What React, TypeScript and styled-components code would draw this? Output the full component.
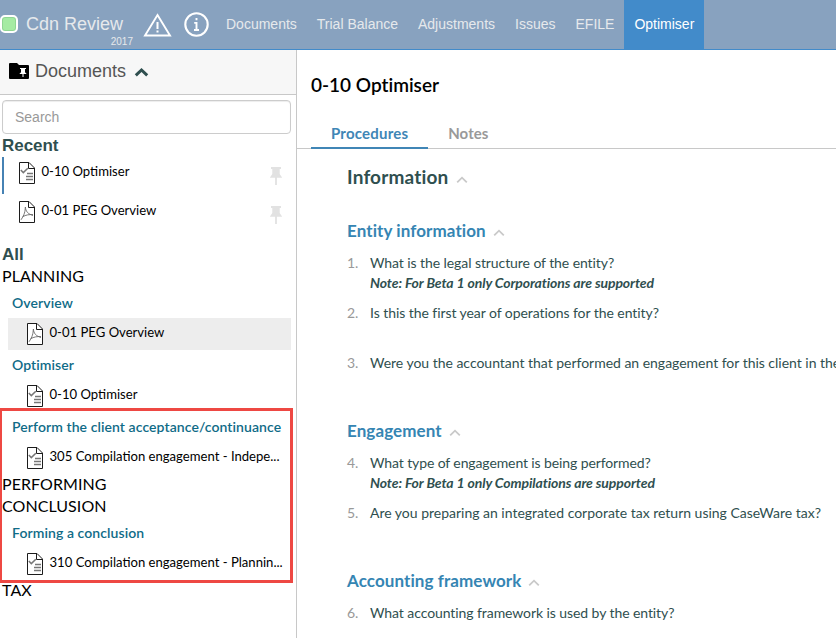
import React from "react";
import styled, { createGlobalStyle } from "styled-components";

const GlobalStyle = createGlobalStyle`
  * { box-sizing: border-box; }
  body { margin: 0; background: #fff; overflow: hidden; }
`;

const sans = '"Liberation Sans", Arial, sans-serif';

const Page = styled.div`
  position: relative;
  display: flex;
  flex-direction: column;
  width: 836px;
  height: 638px;
  overflow: hidden;
  font-family: Lato, sans-serif;
  white-space: nowrap;
`;

const TopBar = styled.header`
  display: flex;
  flex: none;
  height: 50px;
  background: #88a2bf;
  border-bottom: 1px solid #428bca;
  font-family: ${sans};
  color: #e6e9ec;
`;

const StatusBox = styled.span`
  width: 18px;
  height: 18px;
  margin: 15px 7px 0 0;
  border: 2px solid #fff;
  border-radius: 5px;
  background: #a5eba3;
  box-shadow: inset 0 0 0 1px #8fd593;
`;

const Brand = styled.div`
  display: flex;
  flex-direction: column;
  width: 108px;
  padding: 13px 0 0 1px;
`;

const BrandName = styled.span`
  font-size: 18px;
  line-height: 22px;
`;

const BrandYear = styled.span`
  align-self: flex-end;
  margin-top: 1px;
  font-size: 10px;
  line-height: 12px;
`;

const WarningSlot = styled.span`
  display: flex;
  width: 31px;
  margin: 12px 10px 0 10px;
`;

const InfoSlot = styled.span`
  display: flex;
  width: 26px;
  margin: 12px 7px 0 -1px;
`;

const Nav = styled.nav`
  display: flex;
`;

const NavItem = styled.a<{ $active?: boolean }>`
  padding: 0 10px;
  font-size: 14px;
  line-height: 48px;
  height: 49px;
  color: ${(p) => (p.$active ? "#fff" : "inherit")};
  background: ${(p) => (p.$active ? "#428bca" : "transparent")};
`;

const Body = styled.div`
  display: flex;
  flex: 1;
  min-height: 0;
`;

const Sidebar = styled.aside`
  display: flex;
  flex-direction: column;
  flex: none;
  width: 297px;
  border-right: 1px solid #c8c8c8;
`;

const SidebarHeader = styled.div`
  display: flex;
  align-items: flex-start;
  height: 45px;
  flex: none;
  padding: 13px 0 0 9px;
  background: #f7f7f7;
  border-bottom: 1px solid #c8c8c8;
`;

const SidebarTitle = styled.span`
  margin: -2px 8px 0 6px;
  font-family: ${sans};
  font-size: 18px;
  line-height: 20px;
  color: #555;
`;

const SearchInput = styled.input`
  width: 289px;
  height: 34px;
  margin: 5px 0 0 2px;
  padding: 0 12px;
  border: 1px solid #ccc;
  border-radius: 4px;
  box-shadow: inset 0 1px 1px rgba(0, 0, 0, 0.075);
  font-family: ${sans};
  font-size: 14px;
  background: #fff;
  outline: none;
  &::placeholder { color: #999; opacity: 1; }
`;

const ListTitle = styled.h2<{ $height?: number }>`
  margin: 0;
  padding-left: 2px;
  height: ${(p) => p.$height ?? 22}px;
  font-family: ${sans};
  font-size: 17px;
  font-weight: 700;
  line-height: 24px;
  letter-spacing: -0.05px;
  color: #2f4f4f;
`;

const RecentList = styled.div`
  display: flex;
  flex-direction: column;
  height: 87px;
  padding: 1px 0 0 2px;
`;

const RecentItem = styled.div<{ $current?: boolean }>`
  display: flex;
  height: 37px;
  margin-bottom: 2px;
  padding: 5px 13px 0 15px;
  border-left: 2px solid ${(p) => (p.$current ? "#4682b4" : "transparent")};
`;

const DocName = styled.span`
  flex: 1;
  padding-left: 6.5px;
  font-size: 13.1px;
  line-height: 18px;
  color: #000;
`;

const Phase = styled.div`
  height: 22px;
  padding-left: 2px;
  font-size: 16px;
  line-height: 19px;
  letter-spacing: 0.06px;
  color: #000;
`;

const Group = styled.div`
  height: 30px;
  padding-left: 12px;
  font-size: 14px;
  font-weight: 600;
  line-height: 30px;
  letter-spacing: 0.08px;
  color: #0f6b87;
`;

const DocRow = styled.div<{ $selected?: boolean }>`
  display: flex;
  width: 283px;
  height: 32px;
  margin-left: 8px;
  padding: 5px 0 0 19px;
  background: ${(p) => (p.$selected ? "#ededed" : "transparent")};
`;

const Highlight = styled.div`
  position: absolute;
  left: -1px;
  top: 408px;
  width: 294px;
  height: 175px;
  border: 3px solid #ee4843;
`;

const Main = styled.main`
  display: flex;
  flex-direction: column;
  flex: 1;
  min-width: 0;
  overflow: hidden;
`;

const Title = styled.h1`
  margin: 0;
  height: 68px;
  padding: 23px 0 0 14px;
  font-size: 19px;
  font-weight: 600;
  line-height: 24px;
  letter-spacing: -0.01px;
  color: #000;
`;

const Tabs = styled.div`
  display: flex;
  height: 31px;
  padding-left: 14px;
  border-bottom: 1px solid #c8c8c8;
`;

const Tab = styled.div<{ $active?: boolean }>`
  height: 31px;
  padding: 0 20px;
  font-size: 15px;
  font-weight: 700;
  line-height: 30px;
  letter-spacing: ${(p) => (p.$active ? "0.2px" : "0.08px")};
  color: ${(p) => (p.$active ? "#4086b6" : "#999")};
  border-bottom: 2px solid ${(p) => (p.$active ? "#4086b6" : "transparent")};
`;

const Content = styled.div`
  display: flex;
  flex-direction: column;
  padding-left: 50px;
`;

const SectionTitle = styled.h2`
  display: flex;
  gap: 8px;
  margin: 0;
  height: 71px;
  padding-top: 16px;
  font-size: 19px;
  font-weight: 700;
  line-height: 24px;
  letter-spacing: 0.17px;
  color: #2f4f4f;
`;

const Section = styled.section<{ $height: number }>`
  height: ${(p) => p.$height}px;
`;

const SubTitle = styled.h3`
  display: flex;
  gap: 7px;
  margin: 0;
  height: 33px;
  font-size: 17px;
  font-weight: 700;
  line-height: 22px;
  letter-spacing: 0.09px;
  color: #3585b3;
`;

const ChevronSlot = styled.span<{ $top: number }>`
  display: flex;
  padding-top: ${(p) => p.$top}px;
`;

const Question = styled.div<{ $height: number }>`
  display: grid;
  grid-template-columns: 23px auto;
  height: ${(p) => p.$height}px;
  align-content: start;
  font-size: 14px;
  line-height: 20px;
  color: #2f4f4f;
`;

const Num = styled.span`
  color: #999;
`;

const QuestionText = styled.span<{ $tracking?: number }>`
  letter-spacing: ${(p) => p.$tracking ?? -0.01}px;
`;

const Note = styled.em`
  grid-column: 2;
  font-weight: 700;
  letter-spacing: -0.1px;
`;

function WarningIcon() {
  return (
    <svg width="31" height="26" viewBox="0 0 31 26" fill="none">
      <path d="M14.5 3 L27 23.5 H2 Z" stroke="#fff" strokeWidth="1.9" />
      <path d="M14.5 10 V17 M14.5 18.6 V20.6" stroke="#fff" strokeWidth="2" />
    </svg>
  );
}

function InfoIcon() {
  return (
    <svg width="26" height="26" viewBox="0 0 26 26" fill="none">
      <circle cx="13.5" cy="12.5" r="11.2" stroke="#fff" strokeWidth="2.1" />
      <path d="M13.5 6 V8.2 M11.2 10.9 H13.5 V18 M11 18 H16" stroke="#fff" strokeWidth="1.9" />
    </svg>
  );
}

function FolderPinIcon() {
  return (
    <svg width="20" height="16" viewBox="0 0 20 16">
      <path d="M1 0 H8 L10 2 H19 Q20 2 20 3 V15 Q20 16 19 16 H1 Q0 16 0 15 V1 Q0 0 1 0Z" fill="#000" />
      <path d="M11 5 H17 V6 H16 V9.3 L17.7 11 H14.5 V14 H13.5 V11 H10.3 L12 9.3 V6 H11Z" fill="#fff" />
    </svg>
  );
}

function HeavyChevron() {
  return (
    <svg width="15" height="16" viewBox="0 0 15 16" fill="none">
      <path d="M1.8 12.4 L7.5 7 L13.2 12.4" stroke="#2f4f4f" strokeWidth="3" />
    </svg>
  );
}

function Chevron() {
  return (
    <svg width="12" height="8" viewBox="0 0 12 8" fill="none">
      <path d="M1.2 6.3 L6 1.7 L10.8 6.3" stroke="#c9c9c9" strokeWidth="1.8" />
    </svg>
  );
}

function DocIcon({ kind }: { kind: "check" | "pdf" }) {
  return (
    <svg width="16" height="22" viewBox="0 0 16 22" fill="none">
      <path d="M.5 .5 H10 L15.5 6 V21.5 H.5Z" fill="#fff" stroke="#1c1c1c" />
      <path d="M9.5 .5 V6.5 H15.5" stroke="#1c1c1c" />
      {kind === "check" ? (
        <g stroke="#777">
          <path d="M1.8 8 L4.3 10.6 L8.8 6.2" strokeWidth="1.5" />
          <path d="M8 11.5 H14 M7 14.5 H14 M7 17.5 H14" strokeWidth="1.3" />
        </g>
      ) : (
        <path
          d="M6.3 6.2 C6.1 10.5 5.6 13.5 2 18.8 M6.4 6 C6.7 10.5 8.8 12.8 14 14.5 M3.6 15.7 C7 13.9 10 13.4 14 13.6"
          stroke="#666"
          strokeWidth="0.9"
        />
      )}
    </svg>
  );
}

function PinIcon() {
  return (
    <svg width="14" height="28" viewBox="0 0 14 28">
      <path d="M2 5 H12 V7 H10.7 V12 L13.2 15.8 H7.9 V23 H6.1 V15.8 H.8 L3.3 12 V7 H2Z" fill="#e2e2e2" />
    </svg>
  );
}

export default function App() {
  return (
    <Page>
      <GlobalStyle />
      <TopBar>
        <StatusBox />
        <Brand>
          <BrandName>Cdn Review</BrandName>
          <BrandYear>2017</BrandYear>
        </Brand>
        <WarningSlot><WarningIcon /></WarningSlot>
        <InfoSlot><InfoIcon /></InfoSlot>
        <Nav>
          <NavItem>Documents</NavItem>
          <NavItem>Trial Balance</NavItem>
          <NavItem>Adjustments</NavItem>
          <NavItem>Issues</NavItem>
          <NavItem>EFILE</NavItem>
          <NavItem $active>Optimiser</NavItem>
        </Nav>
      </TopBar>
      <Body>
        <Sidebar>
          <SidebarHeader>
            <FolderPinIcon />
            <SidebarTitle>Documents</SidebarTitle>
            <HeavyChevron />
          </SidebarHeader>
          <SearchInput placeholder="Search" />
          <ListTitle>Recent</ListTitle>
          <RecentList>
            <RecentItem $current>
              <DocIcon kind="check" />
              <DocName>0-10 Optimiser</DocName>
              <PinIcon />
            </RecentItem>
            <RecentItem>
              <DocIcon kind="pdf" />
              <DocName>0-01 PEG Overview</DocName>
              <PinIcon />
            </RecentItem>
          </RecentList>
          <ListTitle $height={23}>All</ListTitle>
          <Phase>PLANNING</Phase>
          <Group>Overview</Group>
          <DocRow $selected><DocIcon kind="pdf" /><DocName>0-01 PEG Overview</DocName></DocRow>
          <Group>Optimiser</Group>
          <DocRow><DocIcon kind="check" /><DocName>0-10 Optimiser</DocName></DocRow>
          <Group>Perform the client acceptance/continuance</Group>
          <DocRow><DocIcon kind="check" /><DocName>305 Compilation engagement - Indepe...</DocName></DocRow>
          <Phase>PERFORMING</Phase>
          <Phase>CONCLUSION</Phase>
          <Group>Forming a conclusion</Group>
          <DocRow><DocIcon kind="check" /><DocName>310 Compilation engagement - Plannin...</DocName></DocRow>
          <Phase>TAX</Phase>
        </Sidebar>
        <Main>
          <Title>0-10 Optimiser</Title>
          <Tabs>
            <Tab $active>Procedures</Tab>
            <Tab>Notes</Tab>
          </Tabs>
          <Content>
            <SectionTitle>Information<ChevronSlot $top={11}><Chevron /></ChevronSlot></SectionTitle>
            <Section $height={200}>
              <SubTitle>Entity information<ChevronSlot $top={9}><Chevron /></ChevronSlot></SubTitle>
              <Question $height={50}>
                <Num>1.</Num>
                <QuestionText $tracking={-0.08}>What is the legal structure of the entity?</QuestionText>
                <Note>Note: For Beta 1 only Corporations are supported</Note>
              </Question>
              <Question $height={50}>
                <Num>2.</Num>
                <QuestionText $tracking={-0.06}>Is this the first year of operations for the entity?</QuestionText>
              </Question>
              <Question $height={20}>
                <Num>3.</Num>
                <QuestionText $tracking={-0.02}>Were you the accountant that performed an engagement for this client in the</QuestionText>
              </Question>
            </Section>
            <Section $height={150}>
              <SubTitle>Engagement<ChevronSlot $top={9}><Chevron /></ChevronSlot></SubTitle>
              <Question $height={50}>
                <Num>4.</Num>
                <QuestionText $tracking={-0.11}>What type of engagement is being performed?</QuestionText>
                <Note>Note: For Beta 1 only Compilations are supported</Note>
              </Question>
              <Question $height={20}>
                <Num>5.</Num>
                <QuestionText>Are you preparing an integrated corporate tax return using CaseWare tax?</QuestionText>
              </Question>
            </Section>
            <Section $height={60}>
              <SubTitle>Accounting framework<ChevronSlot $top={9}><Chevron /></ChevronSlot></SubTitle>
              <Question $height={20}>
                <Num>6.</Num>
                <QuestionText $tracking={-0.08}>What accounting framework is used by the entity?</QuestionText>
              </Question>
            </Section>
          </Content>
        </Main>
      </Body>
      <Highlight />
    </Page>
  );
}
